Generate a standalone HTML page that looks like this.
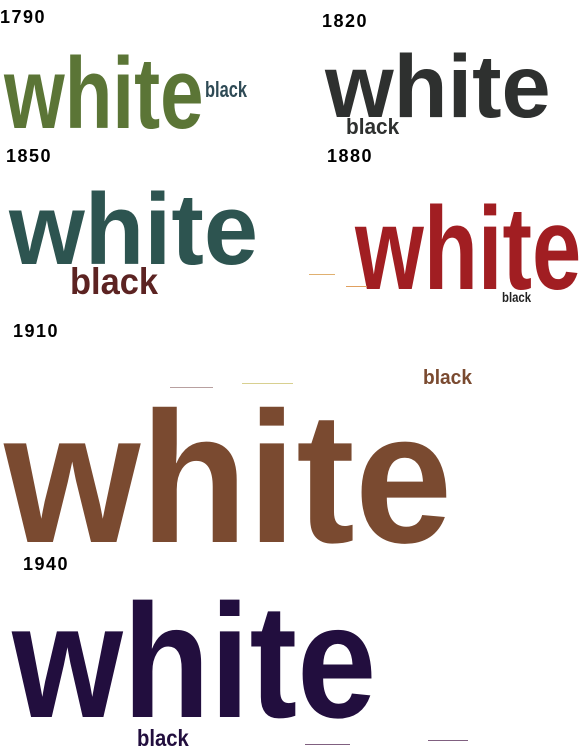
<!DOCTYPE html>
<html><head><meta charset="utf-8"><style>
html,body{margin:0;padding:0;background:#fff;width:587px;height:749px;overflow:hidden;position:relative}
.t{position:absolute;font-family:"Liberation Sans",sans-serif;font-weight:bold;line-height:1;white-space:nowrap;transform-origin:0 0}
.l{position:absolute;font-family:"Liberation Sans",sans-serif;font-weight:bold;font-size:18px;line-height:1;color:#000;letter-spacing:1.5px}
.d{position:absolute;height:1px}
</style></head><body>
<div class="l" style="left:0;top:8px">1790</div>
<div class="t" style="left:4px;top:43px;font-size:101.5px;color:#5b7536;transform:scaleX(.769)">white</div>
<div class="t" style="left:205px;top:79.4px;font-size:21.9px;color:#2e4a55;transform:scaleX(.75)">black</div>

<div class="l" style="left:322px;top:12px">1820</div>
<div class="t" style="left:325px;top:41.5px;font-size:89.2px;color:#2e302f;transform:scaleX(.99)">white</div>
<div class="t" style="left:346px;top:116.4px;font-size:21.9px;color:#2e302f;transform:scaleX(.95)">black</div>

<div class="l" style="left:6px;top:147px">1850</div>
<div class="t" style="left:9px;top:179px;font-size:101.5px;color:#2d5450;transform:scaleX(.96)">white</div>
<div class="t" style="left:70px;top:262.6px;font-size:37px;color:#5c2322;transform:scaleX(.93)">black</div>

<div class="l" style="left:327px;top:147px">1880</div>
<div class="t" style="left:355px;top:190px;font-size:118px;color:#a11e22;transform:scaleX(.75)">white</div>
<div class="t" style="left:502px;top:291.4px;font-size:13.7px;color:#222;transform:scaleX(.83)">black</div>
<div class="d" style="left:309px;top:274px;width:26px;background:#e0b070"></div>
<div class="d" style="left:346px;top:286px;width:21px;background:#e0a060"></div>

<div class="l" style="left:13px;top:322px">1910</div>
<div class="t" style="left:4px;top:385px;font-size:186.6px;color:#7a4a30;transform:scaleX(.94)">white</div>
<div class="t" style="left:423px;top:367.6px;font-size:20.6px;color:#7a4a30;transform:scaleX(.93)">black</div>
<div class="d" style="left:170px;top:387px;width:43px;background:#b8a0a0"></div>
<div class="d" style="left:242px;top:383px;width:51px;background:#d8d090"></div>

<div class="l" style="left:23px;top:555px">1940</div>
<div class="t" style="left:12px;top:581px;font-size:162px;color:#220e3e;transform:scaleX(.88)">white</div>
<div class="t" style="left:137px;top:727px;font-size:23.3px;color:#220e3e;transform:scaleX(.87)">black</div>
<div class="d" style="left:305px;top:744px;width:45px;background:#806080"></div>
<div class="d" style="left:428px;top:740px;width:40px;background:#806080"></div>
</body></html>
